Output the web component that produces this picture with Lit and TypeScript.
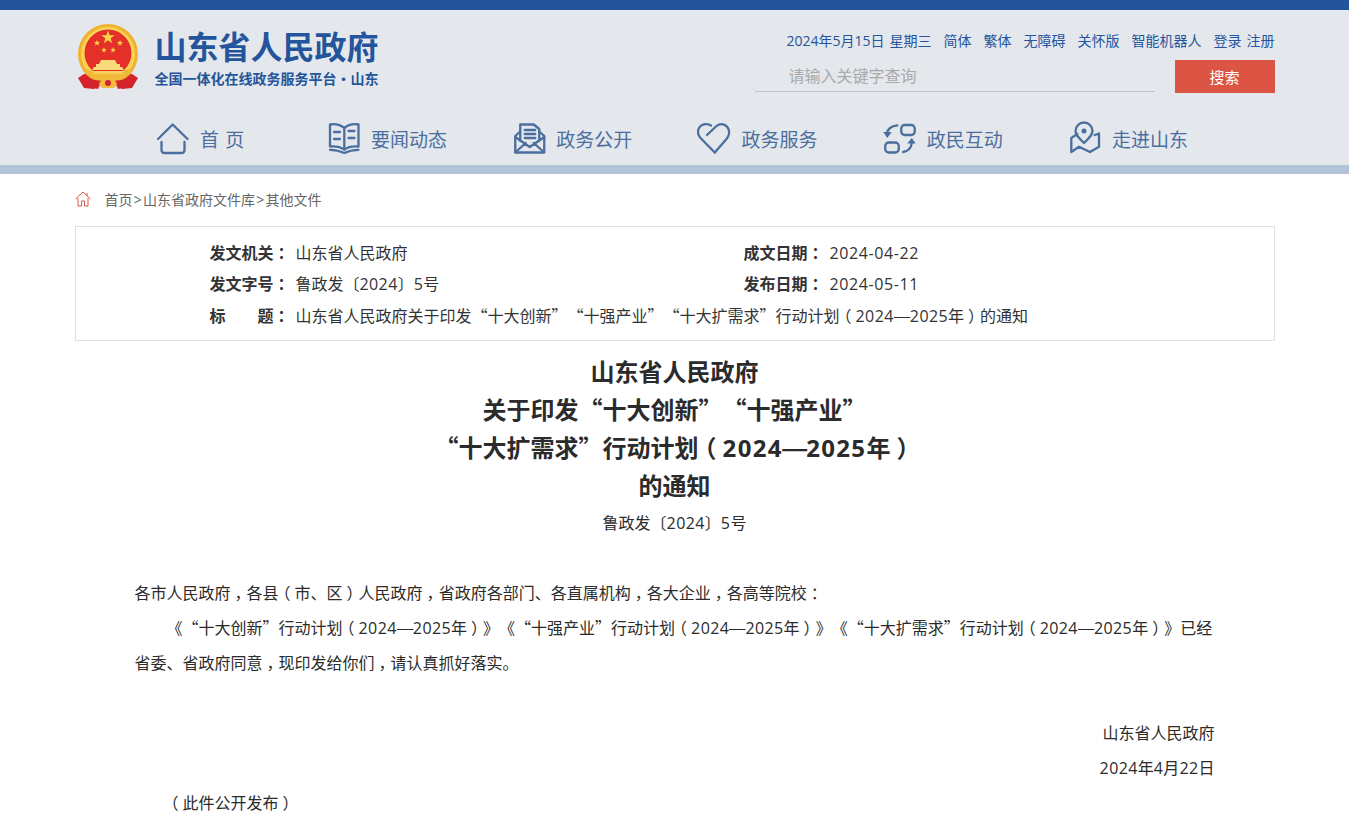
import { LitElement, html, css, svg } from "lit";
import { customElement } from "lit/decorators.js";

/* Icons are written in page coordinates; each svg's viewBox starts at its item's left edge. */
const icons = [
  svg`<path d="M158 139 L172.700 124.500 L187.500 139"/><path d="M161.500 142 V150 Q161.500 153 164.500 153 H181.500 Q184.500 153 184.500 150 V142"/>`,
  svg`<path d="M330 124.500 C335 123.500 340 124.500 344.300 128 C348.500 124.500 353 123.500 358.500 124.500 V146.500 C353 146 348.500 146.500 344.300 149.500 C340 146.500 335 146 330 146.500 Z"/><path d="M344.300 128 V149 M330 149.800 Q338 150 344.300 153 Q350.500 150 358.500 149.800 M334 132 H340 M334 139 H340 M348.500 131 H354.500 M348.500 138 H354.500"/>`,
  svg`<path d="M520.500 131.500 L515.500 136 V152.500 H544.500 V136 L539.500 131.500"/><path d="M520.500 141 V124.500 H534 L539.500 129 V141 M525 130 H535.500 M525 134 H535.500 M525 138 H535.500 M515.500 137 L530 147 L544.500 137 M516 152 L526 143 M544 152 L534 143"/>`,
  svg`<path d="M714.300 152.500 L700 138 C695 132 698 125 705 124.200 C707.500 124 709 124.500 710.500 125.500"/><path d="M706.500 135 L716 126 C720 122.500 726 124 728 129 C729.500 133 728 136.500 726 139 L714.300 152.500"/>`,
  svg`<rect x="901" y="125" width="13.500" height="10" rx="3.500"/><rect x="885" y="142.500" width="13.500" height="10" rx="3.500"/><path d="M897 125.300 C891 126 887.500 129 886.800 133 M903 152 C908 151 911 148 911.500 143"/><path class="solid" d="M883 132 H891.500 L887 138 Z M907 143.500 H915.500 L911.500 138 Z"/>`,
  svg`<path d="M1084 143 C1079 138 1075.500 135 1075.500 131 A8.500 8.500 0 0 1 1092.500 131 C1092.500 135 1089 138 1084 143 Z"/><circle class="solid" cx="1084" cy="131" r="2.500"/><path d="M1077.300 134 L1071.300 138 V152 L1079 146.800 L1090 152 L1099 146.800 V133.500 L1094.700 135"/>`,
];
const navItems: [string, number, string][] = [
  ["首 页", 155, "wide"],
  ["要闻动态", 326, ""],
  ["政务公开", 511.25, ""],
  ["政务服务", 696.5, ""],
  ["政民互动", 881.75, ""],
  ["走进山东", 1067, ""],
];

const star = (cx: number, cy: number, r: number) => {
  const pts: string[] = [];
  for (let i = 0; i < 10; i++) {
    const rad = i % 2 ? r * 0.4 : r;
    const a = -Math.PI / 2 + (i * Math.PI) / 5;
    pts.push(`${(cx + rad * Math.cos(a)).toFixed(2)},${(cy + rad * Math.sin(a)).toFixed(2)}`);
  }
  return svg`<polygon points=${pts.join(" ")} fill="#f9d548"/>`;
};

/* Latin runs take the Latin face; CJK punctuation is centred in its em as in the reference. */
const T = (s: string) =>
  s.split(/([0-9A-Za-z\-]+|[（），：]|—)/).map((p) =>
    /^[0-9A-Za-z\-]+$/.test(p)
      ? html`<span class="l">${p}</span>`
      : /^[（），：]$/.test(p)
        ? html`<span class="f">${p}</span>`
        : p === "—"
          ? html`<span class="dash">${p}</span>`
          : p
  );

@customElement("app-root")
export class AppRoot extends LitElement {
  static styles = css`
    :host { display: block; height: 825px; overflow: hidden; background: #fff; color: #2b2b2b;
      font-family: "Noto Sans CJK SC", "Noto Sans", sans-serif; font-size: 16px; text-spacing-trim: space-all; }
    .l { font-family: "Open Sans", "Noto Sans", sans-serif; line-height: 1; letter-spacing: 0.4px; }
    .f { font-feature-settings: "halt"; padding: 0 0.25em; }
    .dash { display: inline-block; text-indent: 0; padding: 0 0.9px; transform: scaleX(1.28); }
    .top { height: 10px; background: #24559c; }
    .head { background: #e4e7ec; height: 155px; border-bottom: 9px solid #b3c4d6; }
    .wrap { width: 1200px; margin: 0 auto; }
    .brand { display: flex; justify-content: space-between; height: 91px; }
    .logo { display: flex; align-items: flex-start; padding-top: 14px; }
    .logo svg { flex: none; margin-left: 1px; }
    .logo-text { margin: -1px 0 0 15px; color: #24559c; font-weight: 700; white-space: nowrap; }
    .name { font-size: 32px; line-height: 44px; height: 44px; }
    .sub { font-size: 14px; line-height: 20px; margin-top: 1px; }
    .dot { display: inline-block; width: 1em; text-align: center; }
    .right { width: 520px; display: flex; flex-direction: column; align-items: flex-end; padding-top: 19px; }
    .links { display: flex; font-size: 14px; line-height: 22px; color: #24559c; white-space: pre; }
    .links .l { letter-spacing: 0; }
    .links span.i { margin-left: 12px; }
    .links span.near { margin-left: 5px; }
    .search { display: flex; justify-content: space-between; width: 520px; margin-top: 9px; }
    .input { width: 400px; height: 32px; border-bottom: 1px solid #bcc5d3; padding-left: 34px; box-sizing: border-box; line-height: 30px; color: #aaa; font-size: 16px; }
    .btn { width: 100px; height: 33px; line-height: 33px; background: #db5444; color: #fff; text-align: center; font-size: 15px; }
    .nav { display: flex; height: 64px; padding-left: 80.5px; }
    .nav-item { width: 185.25px; flex: none; display: flex; align-items: center; height: 48px; margin-top: 14px; color: #4a6f9e; font-size: 19px; white-space: pre; word-spacing: 2px; }
    .nav-item.wide { width: 171px; }
    .nav-item span { margin-bottom: 2px; }
    .nav-item svg { margin-right: 9px; flex: none; fill: none; stroke: #4a6f9e; stroke-width: 2.3; stroke-linecap: round; stroke-linejoin: round; }
    .nav-item svg .solid { fill: #4a6f9e; stroke: none; }
    .crumb { display: flex; align-items: center; height: 52px; padding-bottom: 2px; box-sizing: border-box; font-size: 14px; color: #666; white-space: pre; }
    .crumb svg { margin-right: 14px; flex: none; }
    .gt { font-family: "Open Sans", sans-serif; padding: 0 1.25px; }
    .meta { border: 1px solid #e1e1e1; height: 115px; box-sizing: border-box; padding: 10px 0 0 134px; color: #333; font-size: 16px; }
    .row { display: flex; height: 31px; line-height: 31px; white-space: nowrap; }
    .row.last { margin-top: 1px; }
    .cell { display: flex; width: 534px; flex: none; }
    .d .l { letter-spacing: 0.6px; }
    .lab { font-weight: 700; width: 80px; margin-right: 6px; flex: none; display: flex; justify-content: space-between; }
    .title { text-align: center; font-size: 24px; font-weight: 700; line-height: 38px; margin-top: 11px; }
    .title .l { letter-spacing: 1.3px; }
    .doc { text-align: center; font-size: 16px; line-height: 36px; }
    .body { padding: 0 60px; margin-top: 35px; line-height: 35px; font-size: 16px; }
    .ind { text-indent: 2em; }
    .gap { height: 35px; }
    .r { text-align: right; }
  `;
  render() {
    return html`
      <div class="top"></div>
      <div class="head"><div class="wrap">
        <div class="brand">
          <div class="logo">
            <svg width="64" height="66" viewBox="0 0 64 66">
              <path d="M8 50 L2 54 L8 64 L18 65 L24 60 L40 60 L46 65 L56 64 L62 54 L56 50 Z" fill="#d4232a"/>
              <circle cx="32" cy="30" r="30" fill="#efb22f"/>
              <circle cx="32" cy="30" r="27" fill="#f8d253"/>
              <circle cx="32" cy="29" r="23.500" fill="#e5302a"/>
              <path d="M5 40 Q14 58 32 58 Q50 58 59 40 Q54 47 46 47 H18 Q10 47 5 40 Z" fill="#f2b93a"/>
              ${star(32, 13.500, 7)}
              ${star(21, 19, 3.300)}${star(44, 19, 3.300)}
              ${star(28, 26, 3)}${star(37, 26, 3)}
              <path d="M23 40 L25 36 H39 L41 40 H44 V43 H46 L48 46 H16 L18 43 H20 V40 Z" fill="#f9d978"/>
              <path d="M16 47 H48 L46 50 H18 Z" fill="#f7cf5a"/>
              <path d="M10 52 Q20 58 26 56 L22 65 L12 63 Z M54 52 Q44 58 38 56 L42 65 L52 63 Z" fill="#d4232a"/>
              <path d="M26 54 H38 L41 60 L38 64 H26 L23 60 Z" fill="#f2b93a"/>
              <circle cx="32" cy="59" r="3" fill="#d4232a"/>
            </svg>
            <div class="logo-text">
              <div class="name">山东省人民政府</div>
              <div class="sub">全国一体化在线政务服务平台<span class="dot">·</span>山东</div>
            </div>
          </div>
          <div class="right">
            <div class="links">
              <span>${T("2024年5月15日")}</span><span class="near">星期三</span><span class="i">简体</span><span class="i">繁体</span><span class="i">无障碍</span><span class="i">关怀版</span><span class="i">智能机器人</span><span class="i">登录</span><span class="near">注册</span>
            </div>
            <div class="search"><div class="input">请输入关键字查询</div><div class="btn">搜索</div></div>
          </div>
        </div>
        <div class="nav">
          ${navItems.map(([n, x, c], i) => html`<div class="nav-item ${c}"><svg width="36" height="40" viewBox="${x} 119 36 40">${icons[i]}</svg><span>${n}</span></div>`)}
        </div>
      </div></div>
      <div class="wrap">
        <div class="crumb">
          <svg width="16" height="16" viewBox="0 0 16 16" fill="none" stroke="#d9584a" stroke-width="1"><path d="M0.500 8 L8 1 L15.500 8 M3 7 V15 H6.500 V10 H9.500 V15 H13 V7 M12 2 V5"/></svg>
          <span>首页<span class="gt">&gt;</span>山东省政府文件库<span class="gt">&gt;</span>其他文件</span>
        </div>
        <div class="meta">
          <div class="row"><div class="cell"><span class="lab">${T("发文机关：")}</span>山东省人民政府</div><div class="cell"><span class="lab">${T("成文日期：")}</span><span class="d">${T("2024-04-22")}</span></div></div>
          <div class="row"><div class="cell"><span class="lab">${T("发文字号：")}</span><span>${T("鲁政发〔2024〕5号")}</span></div><div class="cell"><span class="lab">${T("发布日期：")}</span><span class="d">${T("2024-05-11")}</span></div></div>
          <div class="row last"><span class="lab"><span>标</span><span>题${T("：")}</span></span><span>${T("山东省人民政府关于印发“十大创新”“十强产业”“十大扩需求”行动计划（2024—2025年）的通知")}</span></div>
        </div>
        <div class="title">山东省人民政府<br>关于印发“十大创新”“十强产业”<br>${T("“十大扩需求”行动计划（2024—2025年）")}<br>的通知</div>
        <div class="doc">${T("鲁政发〔2024〕5号")}</div>
        <div class="body">
          <div>${T("各市人民政府，各县（市、区）人民政府，省政府各部门、各直属机构，各大企业，各高等院校：")}</div>
          <div class="ind">${T("《“十大创新”行动计划（2024—2025年）》《“十强产业”行动计划（2024—2025年）》《“十大扩需求”行动计划（2024—2025年）》已经省委、省政府同意，现印发给你们，请认真抓好落实。")}</div>
          <div class="gap"></div>
          <div class="r">山东省人民政府</div>
          <div class="r">${T("2024年4月22日")}</div>
          <div class="ind">${T("（此件公开发布）")}</div>
        </div>
      </div>
    `;
  }
}
